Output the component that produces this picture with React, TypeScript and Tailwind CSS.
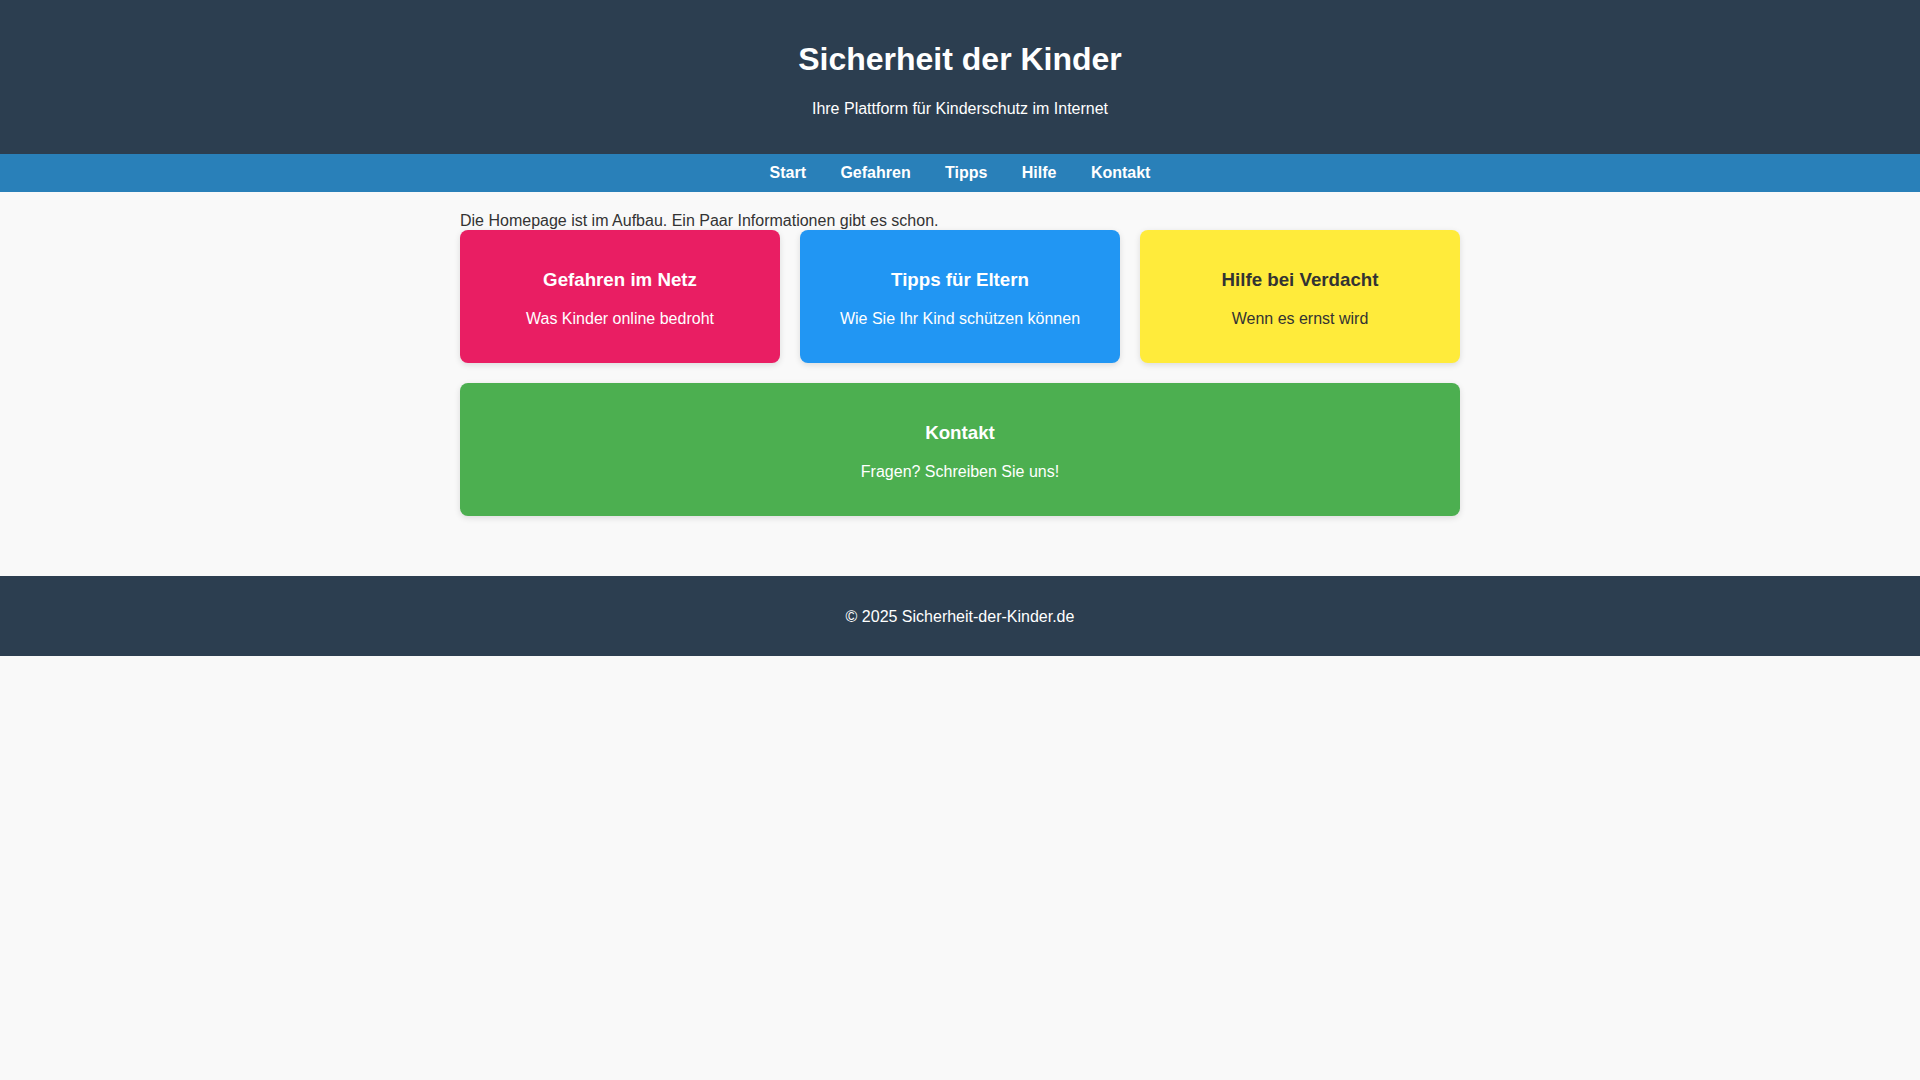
const cards = [
  { title: 'Gefahren im Netz', text: 'Was Kinder online bedroht', cls: 'bg-[#e91e63] text-white' },
  { title: 'Tipps für Eltern', text: 'Wie Sie Ihr Kind schützen können', cls: 'bg-[#2196f3] text-white' },
  { title: 'Hilfe bei Verdacht', text: 'Wenn es ernst wird', cls: 'bg-[#ffeb3b] text-[#333]' },
];

const navItems = ['Start', 'Gefahren', 'Tipps', 'Hilfe', 'Kontakt'];

function Card({ title, text, cls }: { title: string; text: string; cls: string }) {
  return (
    <div className={`rounded-lg px-5 pt-[39.4px] pb-[35px] text-center shadow-[0_2px_6px_rgba(0,0,0,0.12)] ${cls}`}>
      <h3 className="text-[18.72px] font-bold leading-[21.5px]">{title}</h3>
      <p className="mt-[18.72px] text-[16px] leading-[18.4px]">{text}</p>
    </div>
  );
}

export default function App() {
  return (
    <div className="min-h-screen bg-[#f9f9f9] text-[#333] font-['Liberation_Sans',Arial,sans-serif]">
      {/* Header */}
      <header className="bg-[#2c3e50] px-5 pt-[41.4px] pb-[36px] text-center text-white">
        <h1 className="text-[32px] font-bold leading-[36.8px]">Sicherheit der Kinder</h1>
        <p className="mt-[21.4px] text-[16px] leading-[18.4px]">Ihre Plattform für Kinderschutz im Internet</p>
      </header>

      {/* Navigation */}
      <nav className="flex justify-center gap-[34.4px] bg-[#2980b9] py-[10px]">
        {navItems.map((item) => (
          <a key={item} href="#" className="text-[16px] font-bold leading-[18px] text-white">
            {item}
          </a>
        ))}
      </nav>

      {/* Content */}
      <main className="mx-auto max-w-[1000px] pt-[19.6px] pb-[60px]">
        <div className="text-[16px] leading-[18.4px]">
          Die Homepage ist im Aufbau. Ein Paar Informationen gibt es schon.
        </div>
        <div className="grid grid-cols-3 gap-5">
          {cards.map((c) => (
            <Card key={c.title} {...c} />
          ))}
          <div className="col-span-3">
            <Card title="Kontakt" text="Fragen? Schreiben Sie uns!" cls="bg-[#4caf50] text-white" />
          </div>
        </div>
      </main>

      {/* Footer */}
      <footer className="bg-[#2c3e50] pt-[32px] pb-[30px] text-center text-[16px] leading-[18px] text-white">
        © 2025 Sicherheit-der-Kinder.de
      </footer>
    </div>
  );
}
